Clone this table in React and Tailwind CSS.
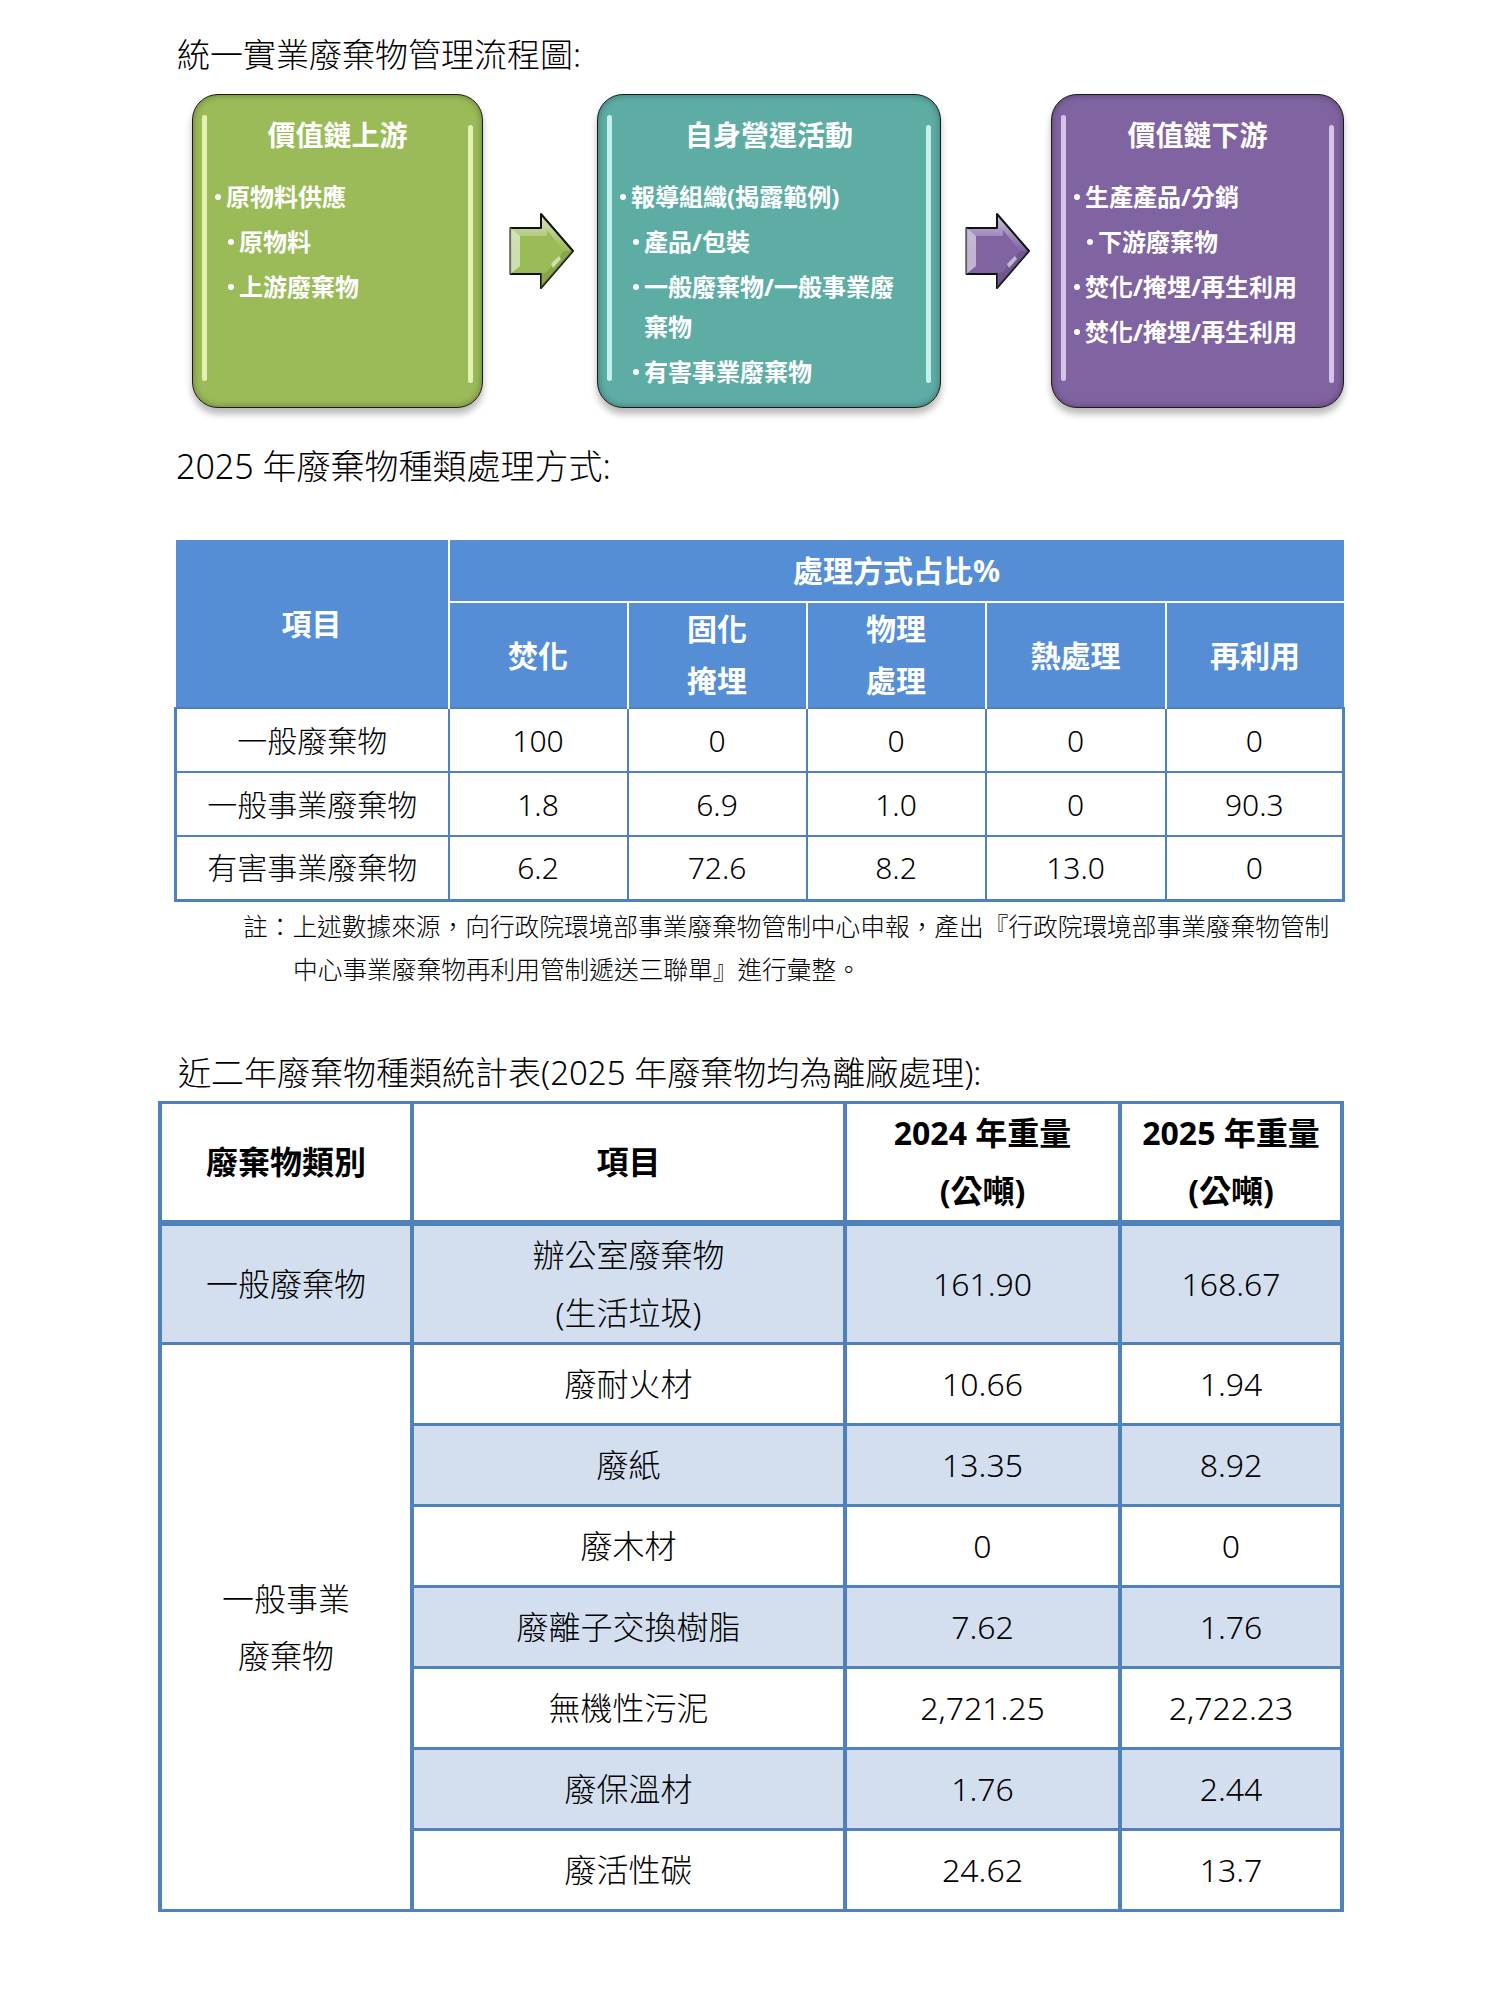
import React from "react";

function Arrow({ id, light, base, dark }) {
  return (
    <svg width="66" height="78" viewBox="0 0 66 78" className="shrink-0">
      <defs>
        <linearGradient id={`g-${id}`} x1="0" y1="0" x2="0" y2="1">
          <stop offset="0" stopColor={light} />
          <stop offset="0.5" stopColor={base} />
          <stop offset="1" stopColor={base} />
        </linearGradient>
      </defs>
      <path d="M1.5,16 H32 V2 L64,39 L32,76 V62 H1.5 Z" fill={`url(#g-${id})`} stroke="#111" strokeWidth="2" strokeLinejoin="round" />
      <path d="M1.5,16 L11,24 L11,54 L1.5,62 Z" fill={light} opacity="0.85" />
      <path d="M11,24 H38 V18 L55,39 L38,60 V54 H11 Z" fill={base} />
      <path d="M38,60 L55,39 L64,39 L32,76 V62 Z" fill={dark} opacity="0.5" />
      <path d="M42,52 L50,44 L52,47 L44,56 Z" fill={light} opacity="0.9" />
    </svg>
  );
}

function Bullet({ sub, children }) {
  return (
    <div className={`flex items-start leading-[40px] whitespace-nowrap ${sub ? "pl-[35px]" : "pl-[22px]"}`}>
      <span className="w-[6px] h-[6px] mt-[17px] rounded-full bg-white mr-[5px] shrink-0" />
      <span>{children}</span>
    </div>
  );
}

function Box({ w, bg, stripe, title, children }) {
  return (
    <div
      className={`relative h-[314px] rounded-[26px] border-[1.5px] border-[#1a1a1a] shrink-0 ${w} ${bg} shadow-[0_6px_7px_rgba(0,0,0,0.28),inset_0_0_7px_rgba(0,0,0,0.35)]`}
    >
      <div className={`absolute left-[9px] top-[20px] bottom-[26px] w-[5px] rounded-full ${stripe} opacity-80`} />
      <div className={`absolute right-[9px] top-[30px] bottom-[24px] w-[5px] rounded-full ${stripe} opacity-80`} />
      <div className="relative text-white font-bold">
        <div className="mt-[21px] text-center text-[28px] leading-[38px]">{title}</div>
        <div className="mt-[23px] text-[24px] flex flex-col gap-[5px]">{children}</div>
      </div>
    </div>
  );
}

const B1 = "border-[2px] border-[#4F81BD]";

export default function App() {
  const t1rows = [
    ["一般廢棄物", "100", "0", "0", "0", "0"],
    ["一般事業廢棄物", "1.8", "6.9", "1.0", "0", "90.3"],
    ["有害事業廢棄物", "6.2", "72.6", "8.2", "13.0", "0"],
  ];
  const t2rows = [
    ["廢耐火材", "10.66", "1.94", false],
    ["廢紙", "13.35", "8.92", true],
    ["廢木材", "0", "0", false],
    ["廢離子交換樹脂", "7.62", "1.76", true],
    ["無機性污泥", "2,721.25", "2,722.23", false],
    ["廢保溫材", "1.76", "2.44", true],
    ["廢活性碳", "24.62", "13.7", false],
  ];
  const c2 = "border-x-[4px] border-y-[3px] border-[#4F81BD] text-center align-middle p-0";
  return (
    <div lang="zh-Hant-TW" className="w-[1504px] min-h-[1989px] bg-white text-black font-['Noto_Sans','Noto_Sans_CJK_TC',sans-serif] font-light">
      <div className="pt-[33px] pl-[177px] text-[33px] leading-[44px]">統一實業廢棄物管理流程圖:</div>

      <div className="mt-[17px] pl-[192px] flex items-center">
        <Box w="w-[291px]" bg="bg-[#9BBB59]" stripe="bg-[#F2FFC8]" title="價值鏈上游">
          <Bullet>原物料供應</Bullet>
          <Bullet sub>原物料</Bullet>
          <Bullet sub>上游廢棄物</Bullet>
        </Box>
        <div className="ml-[26px] mr-[22px] flex">
          <Arrow id="a1" light="#D7E4BD" base="#9BBB59" dark="#76923C" />
        </div>
        <Box w="w-[344px]" bg="bg-[#5EADA5]" stripe="bg-[#DDFFFB]" title="自身營運活動">
          <Bullet>報導組織(揭露範例)</Bullet>
          <Bullet sub>產品/包裝</Bullet>
          <Bullet sub>
            一般廢棄物/一般事業廢
            <br />
            棄物
          </Bullet>
          <Bullet sub>有害事業廢棄物</Bullet>
        </Box>
        <div className="ml-[24px] mr-[20px] flex">
          <Arrow id="a2" light="#CCC1DA" base="#8064A2" dark="#5F497A" />
        </div>
        <Box w="w-[293px]" bg="bg-[#8064A2]" stripe="bg-[#E8DDF7]" title="價值鏈下游">
          <Bullet>生產產品/分銷</Bullet>
          <Bullet sub>下游廢棄物</Bullet>
          <Bullet>焚化/掩埋/再生利用</Bullet>
          <Bullet>焚化/掩埋/再生利用</Bullet>
        </Box>
      </div>

      <div className="mt-[36px] pl-[176px] text-[34px] leading-[44px]">2025 年廢棄物種類處理方式:</div>

      <table className="ml-[174px] mt-[52px] border-collapse table-fixed w-[1168px] text-[30px]">
        <colgroup>
          <col className="w-[273px]" />
          <col className="w-[179px]" />
          <col className="w-[179px]" />
          <col className="w-[179px]" />
          <col className="w-[180px]" />
          <col className="w-[178px]" />
        </colgroup>
        <thead>
          <tr>
            <th rowSpan={2} className="bg-[#558ED5] text-white font-bold border-r-[2px] border-white text-center align-middle p-0">
              項目
            </th>
            <th colSpan={5} className="h-[62px] bg-[#558ED5] text-white font-bold border-b-[2px] border-white text-center align-middle p-0">
              處理方式占比%
            </th>
          </tr>
          <tr className="text-white font-bold">
            <th className="h-[106px] bg-[#558ED5] border-r-[2px] border-white text-center align-middle p-0">焚化</th>
            <th className="bg-[#558ED5] border-r-[2px] border-white text-center align-middle p-0 leading-[52px]">
              固化
              <br />
              掩埋
            </th>
            <th className="bg-[#558ED5] border-r-[2px] border-white text-center align-middle p-0 leading-[52px]">
              物理
              <br />
              處理
            </th>
            <th className="bg-[#558ED5] border-r-[2px] border-white text-center align-middle p-0">熱處理</th>
            <th className="bg-[#558ED5] text-center align-middle p-0">再利用</th>
          </tr>
        </thead>
        <tbody>
          {t1rows.map((r, i) => (
            <tr key={i}>
              {r.map((c, j) => (
                <td
                  key={j}
                  className={`h-[64px] ${B1} ${j === 0 ? "border-l-[3px]" : ""} ${j === 5 ? "border-r-[3px]" : ""} ${i === 2 ? "border-b-[3px]" : ""} text-center align-middle p-0`}
                >
                  {c}
                </td>
              ))}
            </tr>
          ))}
        </tbody>
      </table>

      <div className="ml-[243px] mt-[3px] text-[24.7px] leading-[43px] whitespace-nowrap">
        <div>註：上述數據來源，向行政院環境部事業廢棄物管制中心申報，產出『行政院環境部事業廢棄物管制</div>
        <div className="pl-[50px]">中心事業廢棄物再利用管制遞送三聯單』進行彙整。</div>
      </div>

      <div className="mt-[60px] pl-[178px] text-[33px] leading-[44px]">近二年廢棄物種類統計表(2025 年廢棄物均為離廠處理):</div>

      <table className="ml-[158px] mt-[6px] border-collapse table-fixed w-[1182px] text-[32px]">
        <colgroup>
          <col className="w-[252px]" />
          <col className="w-[433px]" />
          <col className="w-[275px]" />
          <col className="w-[222px]" />
        </colgroup>
        <thead>
          <tr className="font-bold">
            <th className={`${c2} border-b-[6px] h-[120px]`}>廢棄物類別</th>
            <th className={`${c2} border-b-[6px]`}>項目</th>
            <th className={`${c2} border-b-[6px] leading-[58px]`}>
              2024 年重量
              <br />
              (公噸)
            </th>
            <th className={`${c2} border-b-[6px] leading-[58px]`}>
              2025 年重量
              <br />
              (公噸)
            </th>
          </tr>
        </thead>
        <tbody>
          <tr>
            <td className={`${c2} h-[119px] bg-[#D3DFEE]`}>一般廢棄物</td>
            <td className={`${c2} bg-[#D3DFEE] leading-[58px]`}>
              辦公室廢棄物
              <br />
              (生活垃圾)
            </td>
            <td className={`${c2} bg-[#D3DFEE]`}>161.90</td>
            <td className={`${c2} bg-[#D3DFEE]`}>168.67</td>
          </tr>
          {t2rows.map((r, i) => {
            const bg = r[3] ? "bg-[#D3DFEE]" : "bg-white";
            return (
              <tr key={i}>
                {i === 0 && (
                  <td rowSpan={7} className={`${c2} bg-white leading-[57px]`}>
                    一般事業
                    <br />
                    廢棄物
                  </td>
                )}
                <td className={`${c2} h-[81px] ${bg}`}>{r[0]}</td>
                <td className={`${c2} ${bg}`}>{r[1]}</td>
                <td className={`${c2} ${bg}`}>{r[2]}</td>
              </tr>
            );
          })}
        </tbody>
      </table>
    </div>
  );
}
